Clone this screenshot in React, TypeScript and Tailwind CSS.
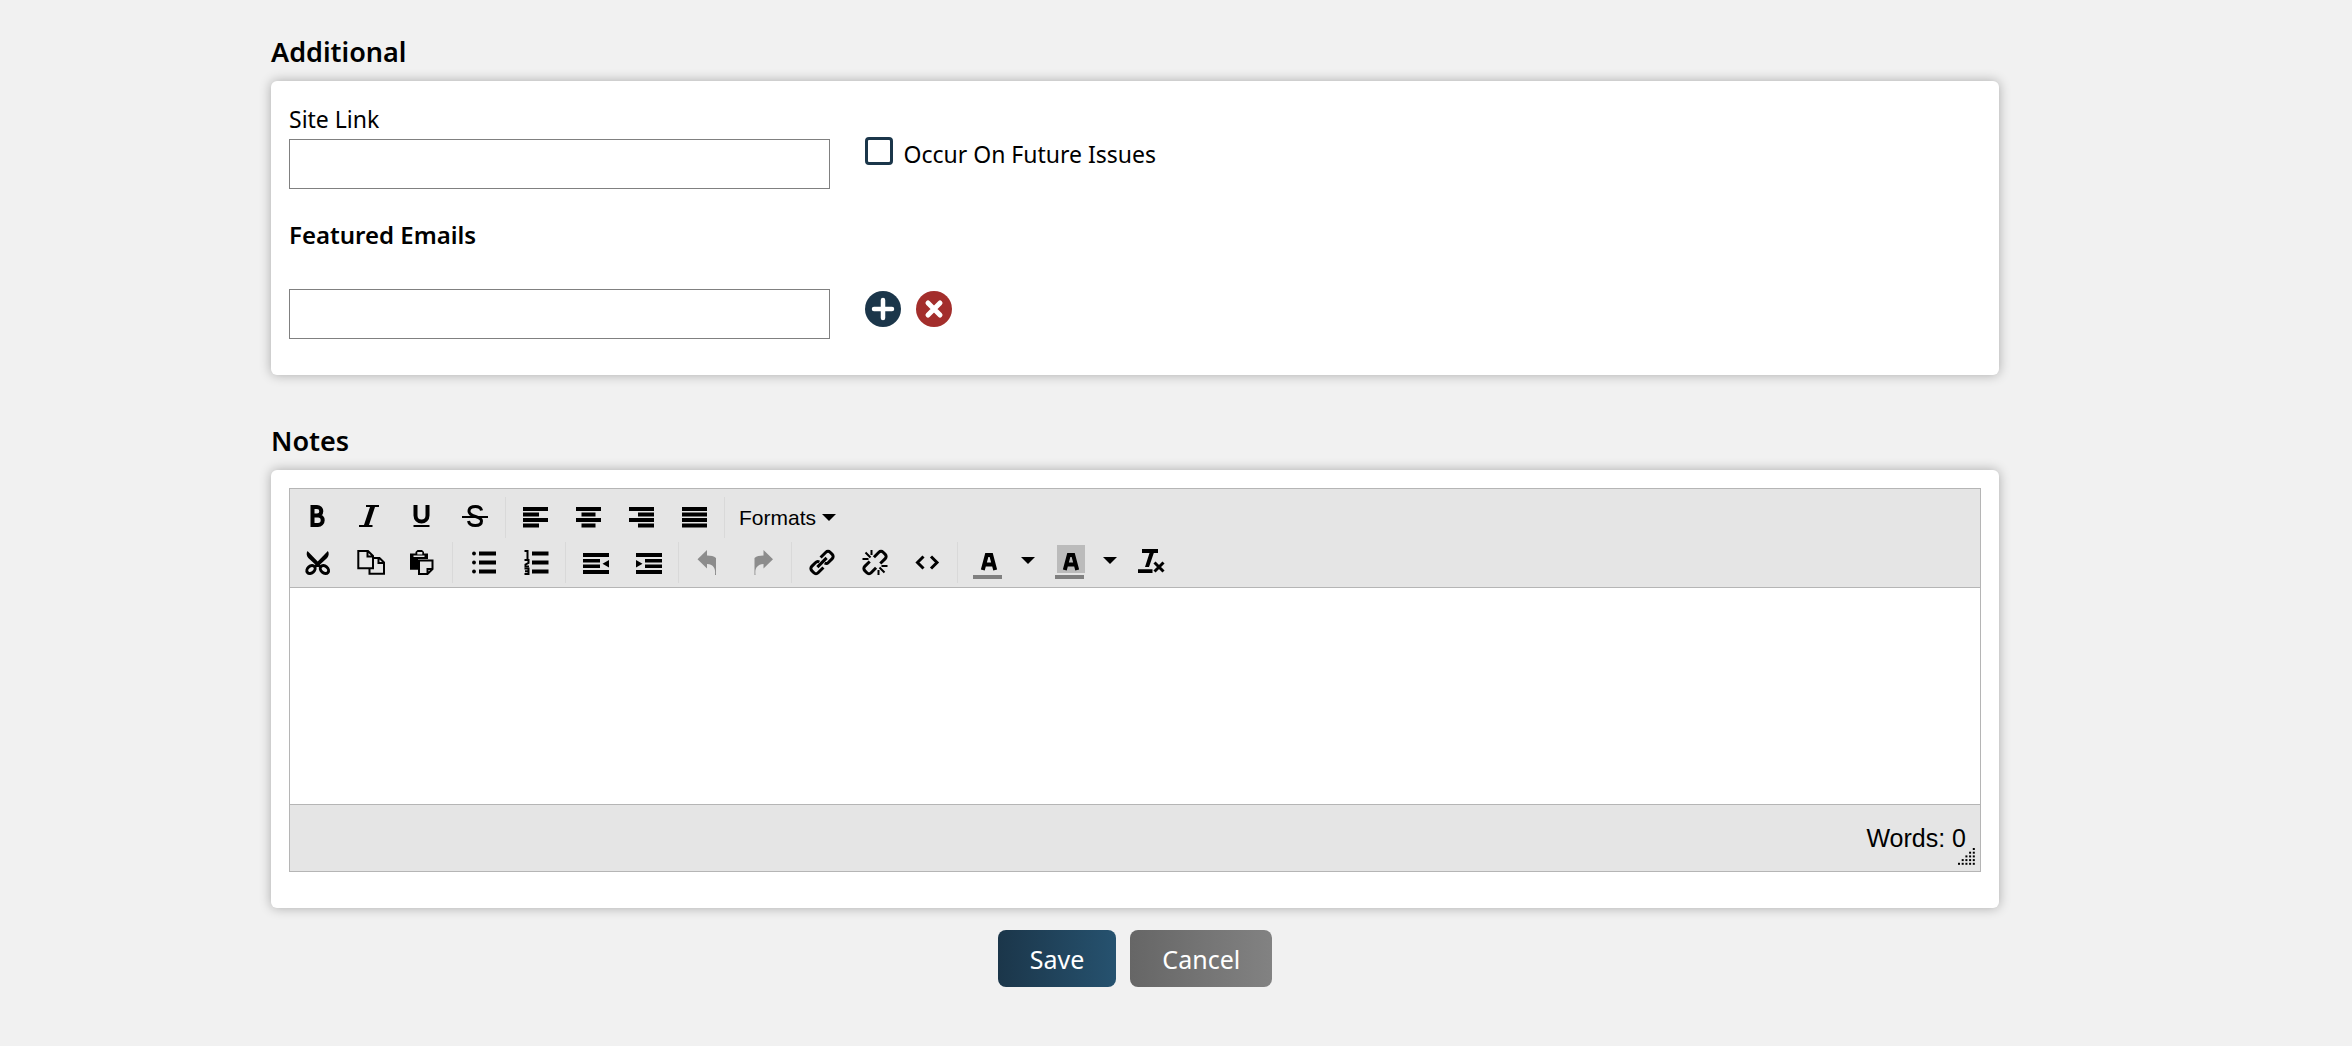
import React, { useState } from 'react';

type IconProps = { children: React.ReactNode };

function Icon({ children }: IconProps) {
  return (
    <svg width="28" height="27" viewBox="0 0 28 27" fill="currentColor" className="block shrink-0 overflow-visible" aria-hidden="true">
      {children}
    </svg>
  );
}

function Lines({ children, width = 4 }: { children: React.ReactNode; width?: number }) {
  return (
    <g fill="none" stroke="currentColor" strokeWidth={width}>
      {children}
    </g>
  );
}

function Caret() {
  return (
    <svg width="14" height="7" viewBox="0 0 14 7" fill="currentColor" className="block shrink-0" aria-hidden="true">
      <path d="M0 0h14L7 7z" />
    </svg>
  );
}

const icons = {
  bold: (
    <Lines>
      <path d="M9.5 3H14a4.3 4.3 0 0 1 0 8.6H9.5M14 11.6h1a4.7 4.7 0 0 1 0 9.4H9.5V1" />
    </Lines>
  ),
  italic: <path d="M10 1h13v2h-4l-6 18h3.500v2H3v-2h5l6-18h-4z" />,
  underline: (
    <>
      <Lines>
        <path d="M6.500 1v10.500a5.600 5.600 0 0 0 12 0V1" />
      </Lines>
      <path d="M4.500 21h16v2h-16z" />
    </>
  ),
  strike: (
    <>
      <Lines width={3}>
        <path d="M19.5 6.5C19 4 16.5 2.5 13.5 2.5c-4 0-6.500 1.800-6.500 4.800 0 6.500 12.500 4 12.500 9.700 0 2.800-2.500 4.500-6.200 4.500-3.800 0-6.300-1.700-6.800-4.500" />
      </Lines>
      <path d="M0 12h26v2H0z" />
    </>
  ),
  left: <path d="M1 3h25v4H1zM1 8.500h16v4H1zM1 14h25v4H1zM1 19.500h16v4H1z" />,
  center: <path d="M1 3h25v4H1zM6.500 8.500h14v4h-14zM1 14h25v4H1zM6.500 19.500h14v4h-14z" />,
  right: <path d="M1 3h25v4H1zM10 8.500h16v4H10zM1 14h25v4H1zM10 19.500h16v4H10z" />,
  justify: <path d="M1 3h25v4H1zM1 8.500h25v4H1zM1 14h25v4H1zM1 19.500h25v4H1z" />,
  cut: (
    <>
      <path d="M4.500 2c-1.500 2.500-.8 5 .8 7l7 6.500-1.300 2.500h7.400l-1.300-2.500 7-6.500c1.600-2 2.300-4.500.8-7l-10.200 10.500z" />
      <Lines width={3}>
        <ellipse cx="8" cy="20.500" rx="4.600" ry="3.400" transform="rotate(-40 8 20.500)" />
        <ellipse cx="21.400" cy="20.500" rx="4.600" ry="3.400" transform="rotate(40 21.400 20.500)" />
      </Lines>
    </>
  ),
  copy: (
    <Lines width={2}>
      <path d="M13 19.300H2.300V2H12l5 5v12.300H13M11.500 2v5.500H17" />
      <path d="M17 9h6.500l4.500 4.500v11.300H13.500v-5.500M22.500 9v5H28" />
    </Lines>
  ),
  paste: (
    <>
      <path d="M1 4.500h5.500V3l2-2h4.500l2 2v1.500h4V10H9v10.700H1z" />
      <path d="M8.300 3h5v2.500h-5zM4.500 6.500h11v1.500h-11z" fill="#e5e5e5" />
      <path d="M10 11.500h13.500v8.500l-5 5H10zM18.500 25v-5h5" fill="#e5e5e5" stroke="currentColor" strokeWidth="2" />
    </>
  ),
  bullets: (
    <>
      <circle cx="5" cy="4.500" r="1.900" />
      <circle cx="5" cy="13.500" r="1.900" />
      <circle cx="5" cy="22.500" r="1.900" />
      <path d="M10 2.500h17v4H10zM10 11.500h17v4H10zM10 20.500h17v4H10z" />
    </>
  ),
  numbers: (
    <>
      <Lines width={2}>
        <path d="M2.500 2h3v8" />
        <path d="M2.500 11h4v3l-3 1.500v2H7" />
        <path d="M2.500 19.500h4v5.500h-4M3 22.200h3.500" />
      </Lines>
      <path d="M10 2.500h16.500v4H10zM10 11.500h16.500v4H10zM10 20.500h16.500v4H10z" />
    </>
  ),
  outdent: <path d="M1 4h26v4H1zM1 10h17v3.500H1zM1 15.500h17V19H1zM1 21h26v4H1zM27 11v7.500L20.500 14.800z" />,
  indent: <path d="M1 4h26v4H1zM10 10h17v3.500H10zM10 15.500h17V19H10zM1 21h26v4H1zM1 11v7.500L7.500 14.800z" />,
  undo: <path d="M12 1v5.500c4 0 6.800.7 9 2.500v17h-1c.8-6-1-10.500-8-11v4.500L2.500 10.200z" />,
  redo: <path d="M15.500 1v5.500c-4 0-6.800.7-9 2.500v17h1c-.8-6 1-10.500 8-11v4.500L25 10.200z" />,
  link: (
    <g transform="translate(14 13.500) rotate(-45)">
      <Lines width={3}>
        <path d="M-2.500 4.500h-7.500a3 3 0 0 1-3-3v-3a3 3 0 0 1 3-3h5.500a3 3 0 0 1 3 2.200" />
        <path d="M2.500-4.500h7.500a3 3 0 0 1 3 3v3a3 3 0 0 1-3 3H4.500a3 3 0 0 1-3-2.200" />
        <path d="M-6.500 0h13" />
      </Lines>
    </g>
  ),
  unlink: (
    <>
      <g transform="translate(14 13.500) rotate(-45)">
        <Lines width={3}>
          <path d="M-3 4.500h-7a3 3 0 0 1-3-3v-3a3 3 0 0 1 3-3h7" />
          <path d="M3-4.500h7a3 3 0 0 1 3 3v3a3 3 0 0 1-3 3H3" />
        </Lines>
      </g>
      <Lines width={2}>
        <path d="M10.500 1v5M4.500 3.500l5 5M1.500 10h6M17.500 26v-5M23.500 23.500l-5-5M26.500 17h-6" />
      </Lines>
    </>
  ),
  code: (
    <Lines width={3}>
      <path d="M9.500 7.500l-6 6 6 6M17 7.500l6 6-6 6" />
    </Lines>
  ),
  foreColor: (
    <>
      <Lines>
        <path d="M8.800 21l4-15h4.400l4 15M10.500 15.500h9" />
      </Lines>
      <path d="M-1 26h29v4H-1z" fill="#808080" />
    </>
  ),
  backColor: (
    <>
      <path d="M1-4h28v28H1z" fill="#bbb" />
      <Lines>
        <path d="M8.800 21l4-15h4.400l4 15M10.500 15.500h9" />
      </Lines>
      <path d="M-1 26h29v4H-1z" fill="#808080" />
    </>
  ),
  clear: (
    <>
      <path d="M4 0h16v4h-4.200L11 18H7l4.500-14H4zM0 20.300h14.500V24H0z" />
      <Lines width={3}>
        <path d="M16.500 13.500l9 9M25.500 13.500l-9 9" />
      </Lines>
    </>
  ),
};

type IconName = keyof typeof icons;

function ToolButton({ icon, label, disabled }: { icon: IconName; label: string; disabled?: boolean }) {
  return (
    <button type="button" aria-label={label} disabled={disabled} className="flex h-[41px] w-[52px] items-center justify-center text-black disabled:text-[#8c8c8c]">
      <Icon>{icons[icon]}</Icon>
    </button>
  );
}

function SplitButton({ icon, label }: { icon: IconName; label: string }) {
  return (
    <div className="mr-px flex">
      <ToolButton icon={icon} label={label} />
      <button type="button" aria-label={`${label} options`} className="flex h-[41px] w-7 items-center justify-center pb-1">
        <Caret />
      </button>
    </div>
  );
}

function Group({ children }: { children: React.ReactNode }) {
  return <div className="flex gap-px border-l border-[#d9d9d9] pr-[3px] pl-1 first:border-l-0 first:pl-px">{children}</div>;
}

function Card({ title, children }: { title: string; children: React.ReactNode }) {
  return (
    <section>
      <h2 className="mb-3.5 text-[27px] leading-[30px] font-semibold">{title}</h2>
      <div className="rounded-md bg-white px-[18px] pt-[18px] pb-9 shadow-[0_0_12px_rgba(0,0,0,0.3)]">{children}</div>
    </section>
  );
}

function ResizeHandle() {
  const dots = [];
  for (let row = 0; row < 5; row++) {
    for (let col = 4 - row; col < 5; col++) {
      dots.push(<rect key={`${row}-${col}`} x={col * 3.7} y={row * 3.7} width="2" height="2" />);
    }
  }
  return (
    <svg width="17" height="17" viewBox="0 0 17 17" className="absolute right-[5px] bottom-[6px]" aria-hidden="true">
      {dots}
    </svg>
  );
}

export default function App() {
  const [future, setFuture] = useState(false);

  return (
    <main className="min-h-screen bg-[#f1f1f1] pt-[37px] pr-[353px] pb-14 pl-[271px] font-['Noto_Sans',sans-serif] text-[23px] text-black">
      <Card title="Additional">
        <div className="flex gap-[35px]">
          <div className="w-[32%]">
            <label htmlFor="site-link" className="block h-10 leading-10">Site Link</label>
            <input id="site-link" type="text" className="block h-[50px] w-full border border-[#808080] bg-white px-3" />
          </div>
          <label className="mt-9 flex h-10 items-start gap-2.5">
            <input
              type="checkbox"
              checked={future}
              onChange={(e) => setFuture(e.target.checked)}
              className="mt-0.5 size-7 shrink-0 appearance-none rounded border-3 border-[#1b364a] bg-white checked:bg-[#1b364a]"
            />
            <span className="leading-[38px]">Occur On Future Issues</span>
          </label>
        </div>

        <h3 className="mt-7 mb-9 text-2xl leading-9 font-semibold">Featured Emails</h3>

        <div className="flex gap-[35px]">
          <input type="text" aria-label="Featured email" className="block h-[50px] w-[32%] border border-[#808080] bg-white px-3" />
          <div className="flex gap-[15px] pt-0.5">
            <button type="button" aria-label="Add email" className="h-9">
              <svg width="36" height="36" viewBox="0 0 36 36" aria-hidden="true">
                <circle cx="18" cy="18" r="18" fill="#1b364a" />
                <path d="M18 9v18M9 18h18" stroke="#fff" strokeWidth="4.500" strokeLinecap="round" />
              </svg>
            </button>
            <button type="button" aria-label="Remove email" className="h-9">
              <svg width="36" height="36" viewBox="0 0 36 36" aria-hidden="true">
                <circle cx="18" cy="18" r="18" fill="#a32e2c" />
                <path d="M12 12l12 12M24 12L12 24" stroke="#fff" strokeWidth="5" strokeLinecap="round" />
              </svg>
            </button>
          </div>
        </div>
      </Card>

      <div className="mt-[51px]">
        <Card title="Notes">
          <div className="border border-[#b5b5b5] font-['Liberation_Sans',Arial,sans-serif]">
            <div className="flex flex-col gap-1 border-b border-[#b5b5b5] bg-[#e5e5e5] pt-2 pb-1">
              <div className="flex">
                <Group>
                  <ToolButton icon="bold" label="Bold" />
                  <ToolButton icon="italic" label="Italic" />
                  <ToolButton icon="underline" label="Underline" />
                  <ToolButton icon="strike" label="Strikethrough" />
                </Group>
                <Group>
                  <ToolButton icon="left" label="Align left" />
                  <ToolButton icon="center" label="Align center" />
                  <ToolButton icon="right" label="Align right" />
                  <ToolButton icon="justify" label="Justify" />
                </Group>
                <Group>
                  <button type="button" className="flex h-[41px] items-center gap-1.5 px-2.5 text-[21px] leading-6">
                    Formats
                    <Caret />
                  </button>
                </Group>
              </div>
              <div className="flex">
                <Group>
                  <ToolButton icon="cut" label="Cut" />
                  <ToolButton icon="copy" label="Copy" />
                  <ToolButton icon="paste" label="Paste" />
                </Group>
                <Group>
                  <ToolButton icon="bullets" label="Bullet list" />
                  <ToolButton icon="numbers" label="Numbered list" />
                </Group>
                <Group>
                  <ToolButton icon="outdent" label="Decrease indent" />
                  <ToolButton icon="indent" label="Increase indent" />
                </Group>
                <Group>
                  <ToolButton icon="undo" label="Undo" disabled />
                  <ToolButton icon="redo" label="Redo" disabled />
                </Group>
                <Group>
                  <ToolButton icon="link" label="Insert link" />
                  <ToolButton icon="unlink" label="Remove link" />
                  <ToolButton icon="code" label="Source code" />
                </Group>
                <Group>
                  <SplitButton icon="foreColor" label="Text color" />
                  <SplitButton icon="backColor" label="Background color" />
                  <ToolButton icon="clear" label="Clear formatting" />
                </Group>
              </div>
            </div>
            <textarea aria-label="Notes" className="block h-[216px] w-full resize-none bg-white p-3 outline-none" />
            <div className="relative flex h-[67px] items-center justify-end border-t border-[#b5b5b5] bg-[#e5e5e5] pr-3.5 text-[25px] leading-8">
              Words: 0
              <ResizeHandle />
            </div>
          </div>
        </Card>
      </div>

      <div className="mt-[22px] flex justify-center gap-3.5 text-[25px] leading-9 text-white">
        <button type="button" className="h-[57px] rounded-lg bg-linear-to-r from-[#1b364a] to-[#26526f] px-8">Save</button>
        <button type="button" className="h-[57px] rounded-lg bg-linear-to-r from-[#666] to-[#828282] px-8">Cancel</button>
      </div>
    </main>
  );
}
